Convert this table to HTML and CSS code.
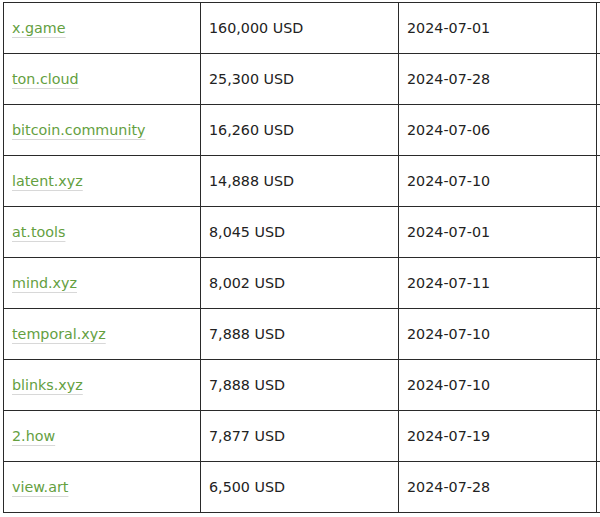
FILE: index.html
```html
<!DOCTYPE html>
<html>
<head>
<meta charset="utf-8">
<link rel="stylesheet" href="styles.css">
</head>
<body>
<table class="sales">
  <colgroup><col class="c1"><col class="c2"><col class="c3"><col class="c4"></colgroup>
  <tr><td><a href="#">x.game</a></td><td>160,000 USD</td><td>2024-07-01</td><td></td></tr>
  <tr><td><a href="#">ton.cloud</a></td><td>25,300 USD</td><td>2024-07-28</td><td></td></tr>
  <tr><td><a href="#">bitcoin.community</a></td><td>16,260 USD</td><td>2024-07-06</td><td></td></tr>
  <tr><td><a href="#">latent.xyz</a></td><td>14,888 USD</td><td>2024-07-10</td><td></td></tr>
  <tr><td><a href="#">at.tools</a></td><td>8,045 USD</td><td>2024-07-01</td><td></td></tr>
  <tr><td><a href="#">mind.xyz</a></td><td>8,002 USD</td><td>2024-07-11</td><td></td></tr>
  <tr><td><a href="#">temporal.xyz</a></td><td>7,888 USD</td><td>2024-07-10</td><td></td></tr>
  <tr><td><a href="#">blinks.xyz</a></td><td>7,888 USD</td><td>2024-07-10</td><td></td></tr>
  <tr><td><a href="#">2.how</a></td><td>7,877 USD</td><td>2024-07-19</td><td></td></tr>
  <tr><td><a href="#">view.art</a></td><td>6,500 USD</td><td>2024-07-28</td><td></td></tr>
</table>
</body>
</html>
```
FILE: styles.css
```css
html, body {
  margin: 0;
  padding: 0;
  background: #fff;
  overflow: hidden;
}
body {
  padding: 2px 0 0 3px;
  font-family: "DejaVu Sans", Verdana, sans-serif;
  font-size: 14.3px;
  color: #222;
}
.sales {
  border-collapse: collapse;
  table-layout: fixed;
  width: 598px;
}
.sales .c1 { width: 197px; }
.sales .c2 { width: 198px; }
.sales .c3 { width: 198px; }
.sales .c4 { width: 5px; }
.sales td {
  border: 1px solid #2a2a2a;
  height: 51px;
  padding: 0 0 0 8px;
  vertical-align: middle;
  box-sizing: border-box;
  white-space: nowrap;
  overflow: hidden;
}
.sales td:last-child {
  padding: 0;
}
.sales a {
  color: #64a03f;
  text-decoration: underline;
  text-decoration-color: #d8d8d8;
  text-decoration-thickness: 1px;
  text-underline-offset: 4px;
}
```
